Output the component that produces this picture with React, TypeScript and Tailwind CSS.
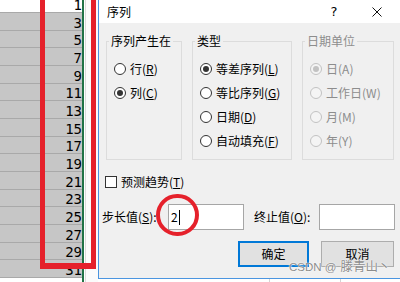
import { ReactNode } from "react";

const values = [1, 3, 5, 7, 9, 11, 13, 15, 17, 19, 21, 23, 25, 27, 29, 31];

function Key({ k, off }: { k: string; off?: boolean }) {
  return <>({off ? k : <span className="underline underline-offset-[1px]">{k}</span>})</>;
}

function Radio({
  text,
  k,
  checked,
  disabled,
}: {
  text: string;
  k: string;
  checked?: boolean;
  disabled?: boolean;
}) {
  return (
    <div className="flex items-center h-[16px] gap-[4px]">
      <span
        className={`w-[12px] h-[12px] rounded-full border flex items-center justify-center shrink-0 ${
          disabled ? "border-[#c2c2c2] bg-[#f4f4f4]" : "border-[#333333] bg-white"
        }`}
      >
        {checked && (
          <span
            className={`w-[6px] h-[6px] rounded-full ${
              disabled ? "bg-[#c2c2c2]" : "bg-[#333333]"
            }`}
          />
        )}
      </span>
      <span className={disabled ? "text-[#8d8d8d]" : "text-black"}>
        {text}
        <Key k={k} off={disabled} />
      </span>
    </div>
  );
}

function Group({
  title,
  width,
  disabled,
  children,
}: {
  title: string;
  width: string;
  disabled?: boolean;
  children: ReactNode;
}) {
  return (
    <fieldset className={`${width} h-[126px] border border-[#dcdcdc] min-w-0`}>
      <legend
        className={`ml-[2px] px-[2px] leading-[14px] ${
          disabled ? "text-[#8d8d8d]" : "text-black"
        }`}
      >
        {title}
      </legend>
      <div className="flex flex-col gap-[8px] pl-[7px] pt-[13px]">{children}</div>
    </fieldset>
  );
}

export default function App() {
  return (
    <div className="w-[400px] h-[282px] relative overflow-hidden flex bg-white">
      {/* sheet column */}
      <div className="w-[98px] h-full flex shrink-0">
        <div className="w-[82px] flex flex-col font-['DejaVu_Sans_Mono',monospace] text-[14px] text-black">
          {values.map((v, i) => (
            <div
              key={v}
              className={`${
                i === 0 ? "h-[13px] bg-white leading-[13px]" : "h-[17.67px] bg-[#c6c6c6] leading-[14px]"
              } border-b border-[#a9a9a9] flex items-end justify-end shrink-0`}
            >
              {v}
            </div>
          ))}
        </div>
        <div className="w-[2px] bg-[#217346]" />
        <div className="w-[1px] bg-white" />
        <div className="w-[1px] bg-[#dadada]" />
        <div className="flex-1 bg-[#fbfbfb]" />
      </div>

      {/* dialog */}
      <div className="flex-1 flex flex-col min-w-0">
        <div className="h-[279px] border-l border-b border-[#4b95e0] flex flex-col font-['Noto_Sans_CJK_SC',sans-serif] text-[12px] leading-[16px] text-black">
          <div className="h-[23px] bg-white flex items-center pl-[8px] pr-[18px]">
            <span>序列</span>
            <span className="ml-auto w-[16px] text-center text-[13px] font-['DejaVu_Sans',sans-serif]">?</span>
            <svg className="ml-[30px]" width="10" height="10" viewBox="0 0 10 10">
              <path d="M0.5 0.5 L9.5 9.5 M9.5 0.5 L0.5 9.5" stroke="#111" strokeWidth="1" />
            </svg>
          </div>

          <div className="flex-1 bg-[#f0f0f0] flex flex-col">
            <div className="flex gap-[10px] pl-[7px] pt-[11px]">
              <Group title="序列产生在" width="w-[76px]">
                <Radio text="行" k="R" />
                <Radio text="列" k="C" checked />
              </Group>
              <Group title="类型" width="w-[100px]">
                <Radio text="等差序列" k="L" checked />
                <Radio text="等比序列" k="G" />
                <Radio text="日期" k="D" />
                <Radio text="自动填充" k="F" />
              </Group>
              <Group title="日期单位" width="w-[92px]" disabled>
                <Radio text="日" k="A" checked disabled />
                <Radio text="工作日" k="W" disabled />
                <Radio text="月" k="M" disabled />
                <Radio text="年" k="Y" disabled />
              </Group>
            </div>

            <div className="flex items-center gap-[4px] h-[16px] mt-[14px] pl-[6px]">
              <span className="w-[12px] h-[12px] border border-[#333333] bg-white" />
              <span>
                预测趋势
                <Key k="T" />
              </span>
            </div>

            <div className="flex items-center mt-[14px] pl-[3px]">
              <span className="w-[66px]">
                步长值
                <Key k="S" />:
              </span>
              <div className="w-[76px] h-[26px] border border-[#a6a6a6] bg-white flex items-center pl-[2px]">
                <span>2</span>
                <span className="w-[1px] h-[15px] bg-black ml-[1px]" />
              </div>
              <span className="w-[65px] ml-[10px]">
                终止值
                <Key k="O" />:
              </span>
              <div className="w-[76px] h-[26px] border border-[#a6a6a6] bg-white" />
            </div>

            <div className="flex gap-[12px] mt-[11px] pl-[139px]">
              <button className="w-[71px] h-[26px] border-2 border-[#0078d7] bg-[#e1e1e1]">
                确定
              </button>
              <button className="w-[73px] h-[26px] border border-[#adadad] bg-[#e1e1e1]">
                取消
              </button>
            </div>
          </div>
        </div>
        <div className="flex-1 bg-white flex">
          <div className="w-[172px] border-r border-[#d4d4d4]" />
          <div className="w-[71px] border-r border-[#d4d4d4]" />
        </div>
      </div>

      {/* annotations */}
      <div className="absolute left-[40px] top-[-10px] w-[56px] h-[279px] border-x-[5px] border-b-[6px] border-[#e5212b]" />
      <div className="absolute left-[156px] top-[194px] w-[43px] h-[42px] rounded-full border-[4px] border-[#e5212b]" />
      <div className="absolute left-[289px] top-[258px] flex items-baseline gap-[4px] text-[#8c8c8c] [text-shadow:0_0_2px_#fff,0_0_1px_#fff] font-['Noto_Sans_CJK_SC',sans-serif] leading-[16px]">
        <span className="text-[11.5px] font-['Liberation_Sans',sans-serif]">CSDN @</span>
        <span className="text-[12.5px]">滕青山丶</span>
      </div>
    </div>
  );
}
